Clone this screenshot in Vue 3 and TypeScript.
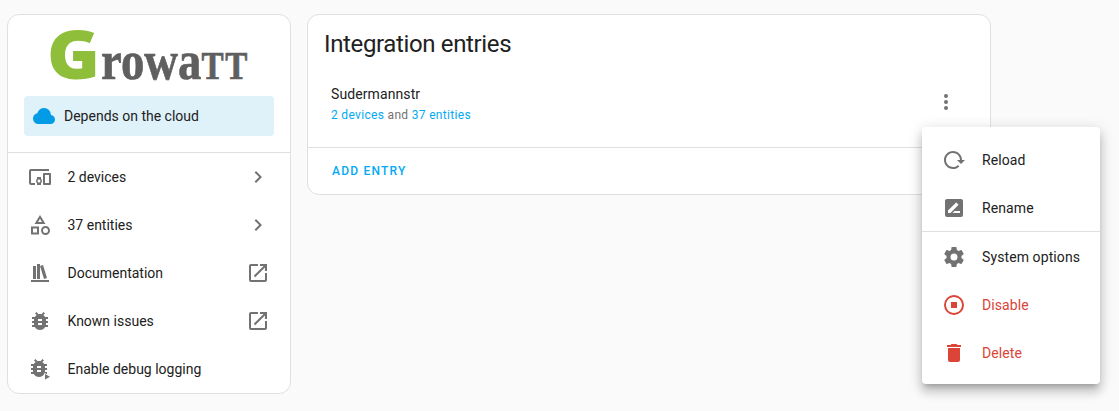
<template>
  <div class="page">
    <!-- Tarjeta de la izquierda -->
    <aside class="card info">
      <div class="logo">
        <span class="logo-g">G</span><span class="logo-rest">rowa<span class="logo-tt">tt</span></span>
      </div>
      <div class="alert">
        <svg class="icon cloud" viewBox="0 0 24 24"><path :d="icons.cloud" /></svg>
        <span>Depends on the cloud</span>
      </div>
      <div class="rows">
        <div v-for="row in rows" :key="row.label" class="row">
          <svg class="icon" viewBox="0 0 24 24">
            <path :d="row.icon" :transform="row.play ? 'translate(-1 -1)' : undefined" />
            <path v-if="row.play" class="play" d="M17 17V22.5L22 19.7Z" />
          </svg>
          <span class="row-label">{{ row.label }}</span>
          <svg v-if="row.end" class="icon end" viewBox="0 0 24 24"><path :d="row.end" /></svg>
        </div>
      </div>
    </aside>

    <!-- Tarjeta de entradas -->
    <main class="card entries">
      <h1>Integration entries</h1>
      <div class="entry">
        <div class="entry-text">
          <div class="entry-name">Sudermannstr</div>
          <div class="entry-sub"><a>2 devices</a> and <a>37 entities</a></div>
        </div>
        <svg class="icon dots" viewBox="0 0 24 24"><path :d="icons.dots" /></svg>
      </div>
      <div class="actions"><span class="add">ADD ENTRY</span></div>
    </main>

    <!-- Menu desplegable -->
    <div class="menu">
      <template v-for="item in menu" :key="item.label">
        <div class="menu-item" :class="{ danger: item.danger }">
          <svg class="icon" viewBox="0 0 24 24"><path :d="item.icon" /></svg>
          <span>{{ item.label }}</span>
        </div>
        <div v-if="item.divider" class="menu-divider"></div>
      </template>
    </div>
  </div>
</template>

<script setup lang="ts">
const bug =
  'M14,12H10V10H14M14,16H10V14H14M20,8H17.19C16.74,7.22 16.12,6.55 15.37,6.04L17,4.41L15.59,3L13.42,5.17C12.96,5.06 12.5,5 12,5C11.5,5 11.04,5.06 10.59,5.17L8.41,3L7,4.41L8.62,6.04C7.88,6.55 7.26,7.22 6.81,8H4V10H6.09C6.04,10.33 6,10.66 6,11V12H4V14H6V15C6,15.34 6.04,15.67 6.09,16H4V18H6.81C7.85,19.79 9.78,21 12,21C14.22,21 16.15,19.79 17.19,18H20V16H17.91C17.96,15.67 18,15.34 18,15V14H20V12H18V11C18,10.66 17.96,10.33 17.91,10H20V8Z'
const openInNew =
  'M14,3V5H17.59L7.76,14.83L9.17,16.24L19,6.41V10H21V3M19,19H5V5H12V3H5C3.89,3 3,3.9 3,5V19A2,2 0 0,0 5,21H19A2,2 0 0,0 21,19V12H19V19Z'
const chevron = 'M8.59,16.58L13.17,12L8.59,7.41L10,6L16,12L10,18L8.59,16.58Z'

const icons = {
  cloud:
    'M6.5 20Q4.22 20 2.61 18.43 1 16.85 1 14.58 1 12.63 2.17 11.1 3.35 9.57 5.25 9.15 5.88 6.85 7.75 5.43 9.63 4 12 4 14.93 4 16.96 6.04 19 8.07 19 11 20.73 11.2 21.86 12.5 23 13.78 23 15.5 23 17.38 21.69 18.69 20.38 20 18.5 20Z',
  dots:
    'M12,16A2,2 0 0,1 14,18A2,2 0 0,1 12,20A2,2 0 0,1 10,18A2,2 0 0,1 12,16M12,10A2,2 0 0,1 14,12A2,2 0 0,1 12,14A2,2 0 0,1 10,12A2,2 0 0,1 12,10M12,4A2,2 0 0,1 14,6A2,2 0 0,1 12,8A2,2 0 0,1 10,6A2,2 0 0,1 12,4Z',
}

const rows = [
  {
    label: '2 devices',
    icon: 'M3 6H21V4H3C1.9 4 1 4.9 1 6V18C1 19.1 1.9 20 3 20H7V18H3V6M13 12H9V13.78C8.39 14.33 8 15.11 8 16C8 16.89 8.39 17.67 9 18.22V20H13V18.22C13.61 17.67 14 16.88 14 16S13.61 14.33 13 13.78V12M11 17.5C10.17 17.5 9.5 16.83 9.5 16S10.17 14.5 11 14.5 12.5 15.17 12.5 16 11.83 17.5 11 17.5M22 8H16C15.5 8 15 8.5 15 9V19C15 19.5 15.5 20 16 20H22C22.5 20 23 19.5 23 19V9C23 8.5 22.5 8 22 8M21 18H17V10H21V18Z',
    end: chevron,
  },
  {
    label: '37 entities',
    icon: 'M11,13.5V21.5H3V13.5H11M9,15.5H5V19.5H9V15.5M12,2L17.5,11H6.5L12,2M12,5.86L10.08,9H13.92L12,5.86M17.5,13C20,13 22,15 22,17.5C22,20 20,22 17.5,22C15,22 13,20 13,17.5C13,15 15,13 17.5,13M17.5,15A2.5,2.5 0 0,0 15,17.5A2.5,2.5 0 0,0 17.5,20A2.5,2.5 0 0,0 20,17.5A2.5,2.5 0 0,0 17.5,15Z',
    end: chevron,
  },
  {
    label: 'Documentation',
    icon: 'M9 3V18H12V3H9M12 5L16 18L19 17L15 4L12 5M5 5V18H8V5H5M3 19V21H21V19H3Z',
    end: openInNew,
  },
  { label: 'Known issues', icon: bug, end: openInNew },
  { label: 'Enable debug logging', icon: bug, play: true },
]

const menu = [
  {
    label: 'Reload',
    icon: 'M2 12C2 16.97 6.03 21 11 21C13.39 21 15.68 20.06 17.4 18.4L15.9 16.9C14.63 18.25 12.86 19 11 19C4.76 19 1.64 11.46 6.05 7.05C10.46 2.64 18 5.77 18 12H15L19 16H19.1L23 12H20C20 7.03 15.97 3 11 3C6.03 3 2 7.03 2 12Z',
  },
  {
    label: 'Rename',
    icon: 'M18,17H10.5L12.5,15H18M6,17V14.5L13.88,6.65C14.07,6.45 14.39,6.45 14.59,6.65L16.35,8.41C16.55,8.61 16.55,8.92 16.35,9.12L8.47,17M19,3H5C3.89,3 3,3.89 3,5V19A2,2 0 0,0 5,21H19A2,2 0 0,0 21,19V5C21,3.89 20.1,3 19,3Z',
    divider: true,
  },
  {
    label: 'System options',
    icon: 'M12,15.5A3.5,3.5 0 0,1 8.5,12A3.5,3.5 0 0,1 12,8.5A3.5,3.5 0 0,1 15.5,12A3.5,3.5 0 0,1 12,15.5M19.43,12.97C19.47,12.65 19.5,12.33 19.5,12C19.5,11.67 19.47,11.34 19.43,11L21.54,9.37C21.73,9.22 21.78,8.95 21.66,8.73L19.66,5.27C19.54,5.05 19.27,4.96 19.05,5.05L16.56,6.05C16.04,5.66 15.5,5.32 14.87,5.07L14.5,2.42C14.46,2.18 14.25,2 14,2H10C9.75,2 9.54,2.18 9.5,2.42L9.13,5.07C8.5,5.32 7.96,5.66 7.44,6.05L4.95,5.05C4.73,4.96 4.46,5.05 4.34,5.27L2.34,8.73C2.21,8.95 2.27,9.22 2.46,9.37L4.57,11C4.53,11.34 4.5,11.67 4.5,12C4.5,12.33 4.53,12.65 4.57,12.97L2.46,14.63C2.27,14.78 2.21,15.05 2.34,15.27L4.34,18.73C4.46,18.95 4.73,19.03 4.95,18.95L7.44,17.94C7.96,18.34 8.5,18.68 9.13,18.93L9.5,21.58C9.54,21.82 9.75,22 10,22H14C14.25,22 14.46,21.82 14.5,21.58L14.87,18.93C15.5,18.67 16.04,18.34 16.56,17.94L19.05,18.95C19.27,19.03 19.54,18.95 19.66,18.73L21.66,15.27C21.78,15.05 21.73,14.78 21.54,14.63L19.43,12.97Z',
  },
  {
    label: 'Disable',
    danger: true,
    icon: 'M12,2A10,10 0 0,0 2,12A10,10 0 0,0 12,22A10,10 0 0,0 22,12A10,10 0 0,0 12,2M12,4C16.41,4 20,7.59 20,12C20,16.41 16.41,20 12,20C7.59,20 4,16.41 4,12C4,7.59 7.59,4 12,4M9,9V15H15V9',
  },
  {
    label: 'Delete',
    danger: true,
    icon: 'M19,4H15.5L14.5,3H9.5L8.5,4H5V6H19M6,19A2,2 0 0,0 8,21H16A2,2 0 0,0 18,19V7H6V19Z',
  },
]
</script>

<style>
html,
body {
  margin: 0;
  background: #fafafa;
}
</style>

<style scoped>
.page {
  position: relative;
  width: 1119px;
  height: 411px;
  overflow: hidden;
  display: flex;
  align-items: flex-start;
  gap: 16px;
  padding: 14px 0 0 7px;
  box-sizing: border-box;
  background: #fafafa;
  font-family: Roboto, sans-serif;
  font-size: 14px;
  color: #212121;
}

.card {
  background: #fff;
  border: 1px solid #e0e0e0;
  border-radius: 12px;
  box-sizing: border-box;
}

.icon {
  width: 24px;
  height: 24px;
  flex: none;
  fill: #727272;
}

/* Info */
.info {
  width: 284px;
  height: 380px;
}

.logo {
  height: 81px;
  box-sizing: border-box;
  padding: 5px 0 0 39px;
  display: flex;
  align-items: baseline;
  font-weight: 700;
  line-height: 1;
}

.logo-g {
  font-family: 'Open Sans', sans-serif;
  font-weight: 800;
  font-size: 67px;
  color: #8fbe3a;
  transform: scaleX(1.07);
  transform-origin: left;
}

.logo-rest {
  font-family: 'Liberation Serif', serif;
  font-size: 55px;
  color: #5f5f5f;
  -webkit-text-stroke: 0.7px #5f5f5f;
  margin-left: 4px;
  white-space: nowrap;
  transform: scaleX(0.85);
  transform-origin: left;
}

.logo-tt {
  font-variant: small-caps;
  letter-spacing: 2px;
}

.alert {
  margin: 0 16px;
  height: 40px;
  display: flex;
  align-items: center;
  gap: 8px;
  padding-left: 8px;
  box-sizing: border-box;
  border-radius: 4px;
  background: #dff1f9;
}

.cloud {
  fill: #039be5;
}

.rows {
  margin-top: 16px;
  border-top: 1px solid #e0e0e0;
}

.row {
  height: 48px;
  display: flex;
  align-items: center;
  padding: 0 20px;
}

.row-label {
  flex: 1;
  margin-left: 15.5px;
}

.play {
  stroke: #fff;
  stroke-width: 1.5;
  paint-order: stroke;
}

/* Entradas */
.entries {
  width: 684px;
  height: 181px;
}

h1 {
  margin: 0;
  padding: 13px 16px 0;
  font-size: 24px;
  font-weight: 400;
  line-height: 32px;
  letter-spacing: -0.36px;
}

.entry {
  height: 72px;
  margin-top: 8px;
  display: flex;
  align-items: center;
  padding: 0 32px 0 23px;
}

.entry-text {
  flex: 1;
}

.entry-name {
  line-height: 20px;
  letter-spacing: 0.1px;
}

.entry-sub {
  margin-top: 1px;
  font-size: 12px;
  line-height: 20px;
  letter-spacing: 0.32px;
  color: #727272;
}

.entry-sub a {
  color: #03a9f4;
}

.dots {
  margin-top: -4px;
}

.actions {
  margin-top: 7px;
  border-top: 1px solid #e0e0e0;
  height: 46px;
  display: flex;
  align-items: center;
  padding: 1px 0 0 24px;
  box-sizing: border-box;
}

.add {
  font-size: 12px;
  font-weight: 500;
  letter-spacing: 1.2px;
  color: #03a9f4;
}

/* Menu */
.menu {
  position: absolute;
  left: 922px;
  top: 127px;
  width: 178px;
  height: 257px;
  padding: 9px 0 7px;
  box-sizing: border-box;
  background: #fff;
  border-radius: 4px;
  box-shadow: 0 5px 5px -3px rgba(0, 0, 0, 0.2), 0 8px 10px 1px rgba(0, 0, 0, 0.14), 0 3px 14px 2px rgba(0, 0, 0, 0.12);
}

.menu-item {
  height: 48px;
  display: flex;
  align-items: center;
  gap: 16px;
  padding-left: 20px;
  letter-spacing: 0.1px;
}

.menu-divider {
  height: 1px;
  margin: -1px 0 1px;
  background: #e0e0e0;
}

.danger {
  color: #db4437;
}

.danger .icon {
  fill: #db4437;
}
</style>
